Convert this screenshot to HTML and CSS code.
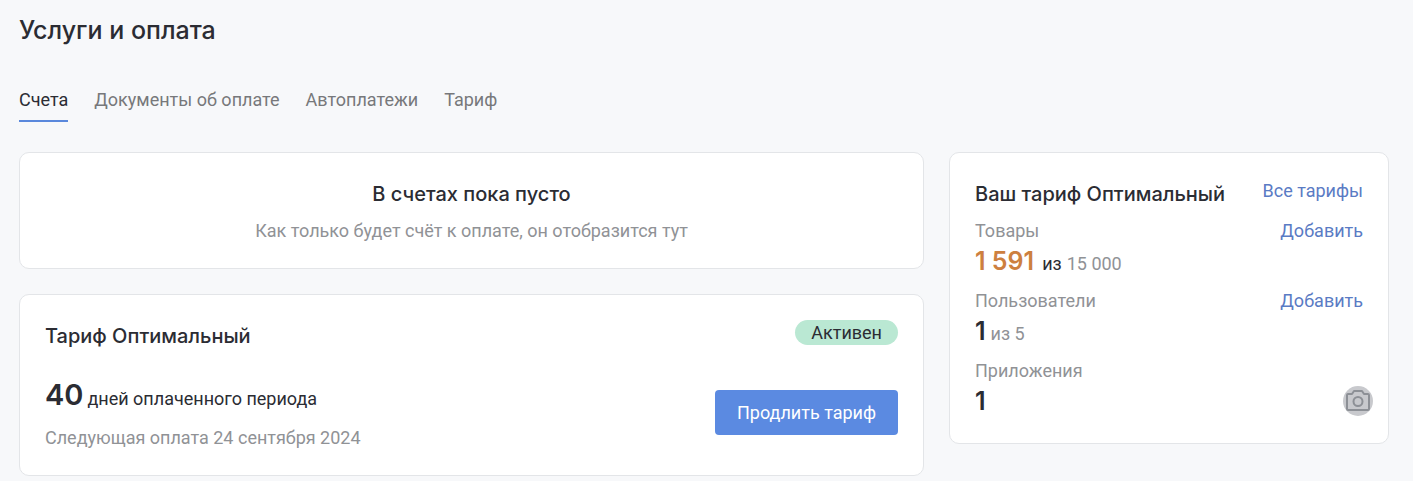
FILE: index.html
```html
<!DOCTYPE html>
<html lang="ru">
<head>
  <meta charset="UTF-8" />
  <meta name="viewport" content="width=device-width, initial-scale=1.0"/>
  <title>Услуги и оплата</title>
  <link rel="stylesheet" href="styles.css">
</head>
<body>

  <h1>Услуги и оплата</h1>

  <nav class="tabs">
    <a class="tab active" href="#bills">Счета</a>
    <a class="tab" href="#documents">Документы об оплате</a>
    <a class="tab" href="#autopay">Автоплатежи</a>
    <a class="tab" href="#tariff">Тариф</a>
  </nav>

  <main class="content">
    <div class="column">
      <section class="card empty">
        <h2>В счетах пока пусто</h2>
        <p class="muted">Как только будет счёт к оплате, он отобразится тут</p>
      </section>

      <section class="card">
        <div class="card-head">
          <h2>Тариф Оптимальный</h2>
          <span class="badge">Активен</span>
        </div>
        <div class="period">
          <div>
            <p class="days"><strong>40</strong> дней оплаченного периода</p>
            <p class="muted">Следующая оплата 24 сентября 2024</p>
          </div>
          <button class="btn" type="button">Продлить тариф</button>
        </div>
      </section>
    </div>

    <aside class="card">
      <div class="card-head">
        <h2>Ваш тариф Оптимальный</h2>
        <a href="#tariffs">Все тарифы</a>
      </div>
      <div class="limits">
        <div class="limit">
          <div class="limit-head">
            <span class="muted">Товары</span>
            <a href="#add-goods">Добавить</a>
          </div>
          <p class="amount"><strong class="warning">1 591</strong> из <span class="muted">15 000</span></p>
        </div>
        <div class="limit">
          <div class="limit-head">
            <span class="muted">Пользователи</span>
            <a href="#add-users">Добавить</a>
          </div>
          <p class="amount"><strong>1</strong> <span class="muted">из 5</span></p>
        </div>
        <div class="limit">
          <div class="limit-head">
            <span class="muted">Приложения</span>
          </div>
          <p class="amount"><strong>1</strong></p>
        </div>
      </div>
      <button class="camera" type="button" aria-label="Сделать снимок">
        <svg width="30" height="30" viewBox="0 0 30 30" fill="none" stroke="#8d9096" stroke-width="2" stroke-linejoin="round">
          <path d="M5 8H9L11 5H19L21 8H25Q26 8 26 9V23Q26 24 25 24H5Q4 24 4 23V9Q4 8 5 8Z"/>
          <circle cx="15" cy="15.500" r="4.500"/>
        </svg>
      </button>
    </aside>
  </main>

</body>
</html>
```
FILE: styles.css
```css
* {
  box-sizing: border-box;
}

body {
  margin: 0;
  padding: 12px 24px 0 19px;
  font-family: Roboto, "Noto Sans", sans-serif;
  font-size: 18px;
  line-height: 25px;
  background: #f7f8fa;
  color: #2b2c33;
}

h1, h2, p {
  margin: 0;
  font-weight: 500;
}

h1, h2, strong {
  font-family: Inter, "Noto Sans", sans-serif;
}

h1 {
  font-size: 25px;
  line-height: 36px;
}

h2 {
  font-size: 20px;
  line-height: 32px;
}

p {
  font-weight: 400;
}

strong {
  font-weight: 600;
}

a {
  color: #5a7bc4;
  text-decoration: none;
}

.muted {
  color: #909296;
}

.tabs {
  display: flex;
  gap: 26px;
  margin: 39px 0 30px;
}

.tab {
  padding-bottom: 8px;
  border-bottom: 2px solid transparent;
  color: #77787b;
}

.tab.active {
  color: #2b2c33;
  border-color: #5a88dc;
}

.content {
  display: grid;
  grid-template-columns: 1fr 440px;
  gap: 25px;
  align-items: start;
}

.column {
  display: grid;
  gap: 25px;
}

.card {
  position: relative;
  padding: 25px;
  background: #fff;
  border: 1px solid #e3e5e8;
  border-radius: 10px;
}

.empty {
  text-align: center;
}

.empty h2 {
  margin-bottom: 8px;
}

.card-head, .limit-head {
  display: flex;
  justify-content: space-between;
  align-items: flex-start;
}

.badge {
  padding: 0 16px;
  background: #bae8d3;
  border-radius: 13px;
}

.period {
  display: flex;
  justify-content: space-between;
  align-items: center;
  margin-top: 23px;
}

.days, .amount {
  display: flex;
  align-items: baseline;
  gap: 5px;
}

.days {
  gap: 4px;
  margin-bottom: 10px;
}

.days strong {
  font-size: 29px;
  line-height: 40px;
}

.btn {
  height: 45px;
  padding: 0 22px;
  background: #5b8ae1;
  color: #fff;
  border: none;
  border-radius: 4px;
  font: inherit;
  cursor: pointer;
}

.limits {
  display: grid;
  gap: 10px;
  margin-top: 8px;
}

.amount {
  padding-top: 1px;
}

.amount strong {
  font-size: 25px;
  line-height: 34px;
}

.amount .warning {
  margin-right: 3px;
  color: #cd803f;
}

/* floating over the card corner */
.camera {
  position: absolute;
  right: 15px;
  bottom: 27px;
  width: 30px;
  height: 30px;
  padding: 0;
  background: #c8c9cd;
  border: none;
  border-radius: 50%;
  cursor: pointer;
}

.camera svg {
  display: block;
}
```
